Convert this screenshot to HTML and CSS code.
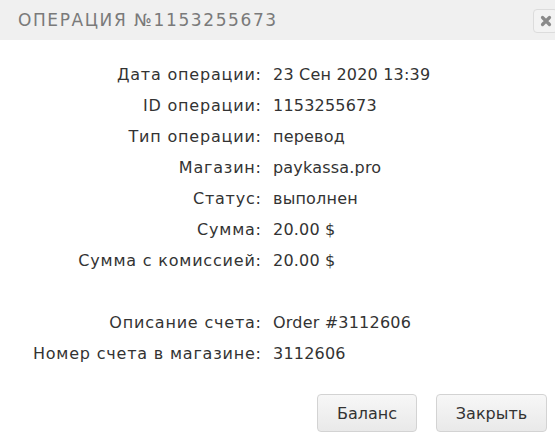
FILE: index.html
```html
<!DOCTYPE html>
<html lang="ru">
<head>
<meta charset="utf-8">
<link rel="stylesheet" href="styles.css">
</head>
<body>
<div class="dialog">
  <div class="header">
    <div class="title">Операция №1153255673</div>
    <button class="close" aria-label="close">
      <svg width="12" height="12" viewBox="0 0 12 12"><path d="M2.5 2.5 L9.5 9.5 M9.5 2.5 L2.5 9.5" stroke="#8a8a8a" stroke-width="3.2" stroke-linecap="round"/></svg>
    </button>
  </div>
  <div class="body">
    <div class="grid">
      <div class="label">Дата операции:</div><div class="value">23 Сен 2020 13:39</div>
      <div class="label">ID операции:</div><div class="value">1153255673</div>
      <div class="label">Тип операции:</div><div class="value">перевод</div>
      <div class="label">Магазин:</div><div class="value">paykassa.pro</div>
      <div class="label">Статус:</div><div class="value">выполнен</div>
      <div class="label">Сумма:</div><div class="value">20.00 $</div>
      <div class="label">Сумма с комиссией:</div><div class="value">20.00 $</div>
      <div class="spacer"></div><div class="spacer"></div>
      <div class="label">Описание счета:</div><div class="value">Order #3112606</div>
      <div class="label">Номер счета в магазине:</div><div class="value">3112606</div>
    </div>
  </div>
  <div class="footer">
    <button class="btn">Баланс</button>
    <button class="btn">Закрыть</button>
  </div>
</div>
</body>
</html>
```
FILE: styles.css
```css
html, body { margin: 0; padding: 0; background: #fff; }
body { width: 555px; height: 435px; overflow: hidden; font-family: "DejaVu Sans", "Open Sans", sans-serif; }
.dialog { display: flex; flex-direction: column; height: 435px; }
.header { height: 40px; flex-shrink: 0; background: #f0f0f0; display: flex; align-items: center; justify-content: space-between; padding-left: 18px; }
.title { text-transform: uppercase; color: #7a7a7a; font-size: 17px; letter-spacing: 1.6px; font-family: "DejaVu Sans", sans-serif; }
.close { width: 25px; height: 24px; margin-right: -3px; margin-top: 1px; border: 1px solid #dcdcdc; border-radius: 4px; background: #f3f3f3; display: flex; align-items: center; justify-content: center; padding: 0; }
.body { padding-top: 19px; }
.grid { display: grid; grid-template-columns: 261px auto; column-gap: 12px; grid-auto-rows: 31px; align-items: center; color: #333; font-size: 16px; }
.label { text-align: right; letter-spacing: 0.8px; margin-right: -0.8px; }
.value { letter-spacing: 0.2px; }
.footer { display: flex; justify-content: flex-end; gap: 19px; padding-right: 8px; margin-top: auto; margin-bottom: 3px; }
.btn { height: 38px; border: 1px solid #d3d3d3; border-radius: 4px; background: linear-gradient(#f7f7f7, #e9e9e9); color: #333; font-family: "DejaVu Sans", sans-serif; font-size: 16px; padding: 0; }
.btn:first-child { width: 100px; }
.btn:last-child { width: 111px; }
```
